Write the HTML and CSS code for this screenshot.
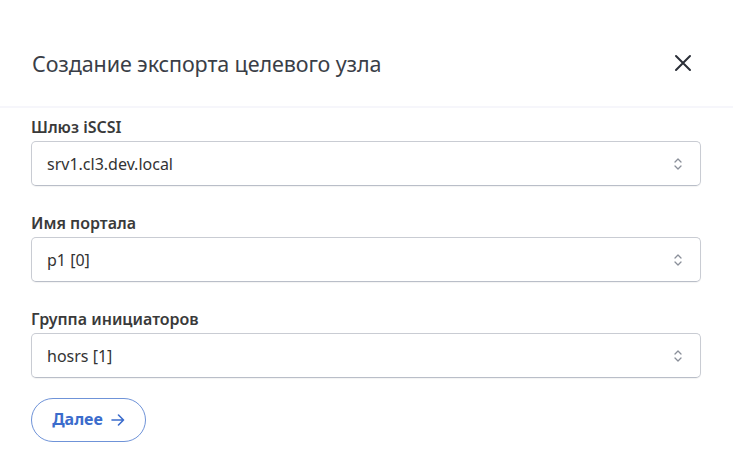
FILE: index.html
```html
<!DOCTYPE html>
<html lang="ru">
<head>
    <meta charset="UTF-8">
    <meta name="viewport" content="width=device-width, initial-scale=1.0">
    <title>Создание экспорта целевого узла</title>
    <link rel="stylesheet" href="styles.css">
</head>
<body>

<div class="modal">
    <div class="modal-header">
        <h2 class="modal-title">Создание экспорта целевого узла</h2>
        <button class="close-btn" aria-label="Закрыть">
            <svg width="18" height="18" viewBox="0 0 18 18">
                <path d="M2 2L16 16M16 2L2 16" stroke="#2b2f38" stroke-width="2" stroke-linecap="round"/>
            </svg>
        </button>
    </div>

    <form class="modal-body">
        <div class="field">
            <label class="field-label">Шлюз iSCSI</label>
            <div class="select">
                <span class="select-value">srv1.cl3.dev.local</span>
                <svg class="select-arrows" width="10" height="14" viewBox="0 0 10 14">
                    <path d="M2 5L5 2L8 5M2 9L5 12L8 9" fill="none" stroke="#8a8f99" stroke-width="1.3" stroke-linecap="round" stroke-linejoin="round"/>
                </svg>
            </div>
        </div>

        <div class="field">
            <label class="field-label">Имя портала</label>
            <div class="select">
                <span class="select-value">p1 [0]</span>
                <svg class="select-arrows" width="10" height="14" viewBox="0 0 10 14">
                    <path d="M2 5L5 2L8 5M2 9L5 12L8 9" fill="none" stroke="#8a8f99" stroke-width="1.3" stroke-linecap="round" stroke-linejoin="round"/>
                </svg>
            </div>
        </div>

        <div class="field">
            <label class="field-label">Группа инициаторов</label>
            <div class="select">
                <span class="select-value">hosrs [1]</span>
                <svg class="select-arrows" width="10" height="14" viewBox="0 0 10 14">
                    <path d="M2 5L5 2L8 5M2 9L5 12L8 9" fill="none" stroke="#8a8f99" stroke-width="1.3" stroke-linecap="round" stroke-linejoin="round"/>
                </svg>
            </div>
        </div>

        <div class="actions">
            <button type="button" class="next-btn">
                Далее
                <svg class="arrow" width="14" height="12" viewBox="0 0 14 12">
                    <path d="M1 6H12.5M7.5 1L12.5 6L7.5 11" fill="none" stroke="#3b6ccc" stroke-width="1.6" stroke-linecap="round" stroke-linejoin="round"/>
                </svg>
            </button>
        </div>
    </form>
</div>

</body>
</html>
```

FILE: styles.css
```css
body {
    margin: 0;
    background-color: #fff;
    font-family: "Noto Sans", "Open Sans", sans-serif;
    color: #333;
}
.modal {
    width: 733px;
}
.modal-header {
    display: flex;
    align-items: center;
    justify-content: space-between;
    height: 108px;
    padding: 20px 41px 0 32px;
    box-sizing: border-box;
    border-bottom: 2px solid #f6f6fb;
}
.modal-title {
    margin: 0;
    font-size: 21.5px;
    font-weight: 400;
    color: #3a3e47;
    letter-spacing: -0.1px;
}
.close-btn {
    border: none;
    background: none;
    padding: 0;
    display: flex;
    cursor: pointer;
}
.modal-body {
    padding: 8px 32px 0 31px;
}
.field {
    display: flex;
    flex-direction: column;
    margin-bottom: 26px;
}
.field-label {
    font-size: 16px;
    font-weight: 600;
    color: #3a3a3a;
    line-height: 22px;
    margin-bottom: 3px;
}
.select {
    display: flex;
    align-items: center;
    justify-content: space-between;
    height: 45px;
    box-sizing: border-box;
    padding: 0 17px 0 15px;
    border: 1px solid #c9ccd3;
    border-bottom-color: #b9bec8;
    border-radius: 5px;
    box-shadow: 0 1px 1px rgba(0, 0, 0, 0.05);
}
.select-value {
    font-size: 16px;
    color: #333;
}
.actions {
    margin-top: -6px;
}
.next-btn {
    display: flex;
    align-items: center;
    justify-content: center;
    gap: 8px;
    height: 44px;
    width: 115px;
    padding: 0 0 2px;
    border: 1.5px solid #6f93d8;
    border-radius: 22px;
    background: #fff;
    color: #3b6ccc;
    font-family: inherit;
    font-size: 16px;
    font-weight: 700;
    cursor: pointer;
}
.next-btn .arrow {
    margin-top: 2px;
}
```
